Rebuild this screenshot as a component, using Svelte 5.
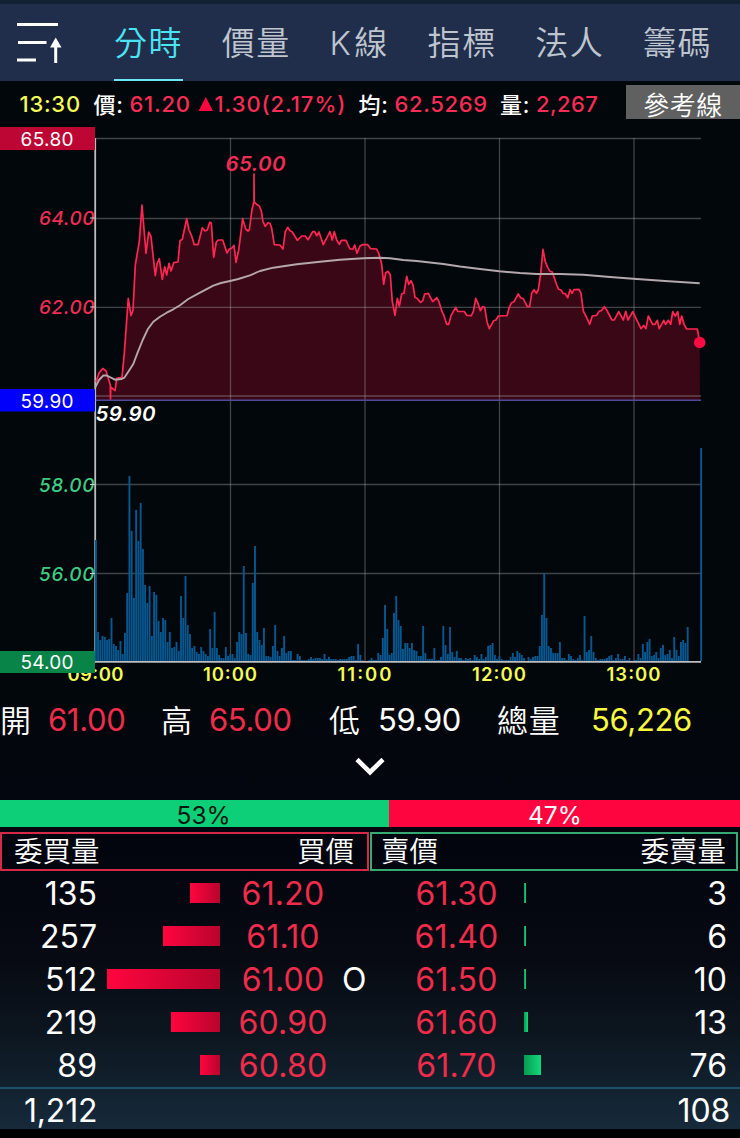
<script lang="ts">
  interface Level {
    price: string;
    volume: string;
    bar: number;
    mark?: string;
  }

  const tabs = ['分時', '價量', 'K線', '指標', '法人', '籌碼'];
  let active = $state(0);

  const stats = [
    { label: '開', value: '61.00', tone: 'up' },
    { label: '高', value: '65.00', tone: 'up' },
    { label: '低', value: '59.90', tone: 'flat' },
    { label: '總量', value: '56,226', tone: 'total' },
  ];

  const bids: Level[] = [
    { price: '61.20', volume: '135', bar: 30 },
    { price: '61.10', volume: '257', bar: 57 },
    { price: '61.00', volume: '512', bar: 113, mark: 'O' },
    { price: '60.90', volume: '219', bar: 49 },
    { price: '60.80', volume: '89', bar: 20 },
  ];

  const asks: Level[] = [
    { price: '61.30', volume: '3', bar: 2 },
    { price: '61.40', volume: '6', bar: 2 },
    { price: '61.50', volume: '10', bar: 2 },
    { price: '61.60', volume: '13', bar: 3.5 },
    { price: '61.70', volume: '76', bar: 17 },
  ];

  // chart geometry
  const left = 95.8;
  const right = 701;
  const base = 661;
  const perMinute = 2.242;
  const hGrid = [138.5, 218.5, 307.3, 396, 484.5, 573.5];
  const hours = [
    { label: '10:00', x: 230.5 },
    { label: '11:00', x: 365 },
    { label: '12:00', x: 499.5 },
    { label: '13:00', x: 634 },
  ];
  const axis = [
    { label: '64.00', y: 225, tone: 'up' },
    { label: '62.00', y: 314, tone: 'up' },
    { label: '58.00', y: 491.5, tone: 'down' },
    { label: '56.00', y: 580.5, tone: 'down' },
  ];

  const price =
    '96,382 99,373 102.7,368.5 106,370.7 110.3,385 110.5,399 110.8,387 115,390.7 116.7,378.3 122,377.3 124.3,353.3 126,330 128.3,298.3 131,315.7 133,310 ' +
    '135.3,265 139.3,241.7 142,205 146,253.3 148.7,232 151,236.7 155.3,275.7 157,264 159.3,258.7 162.3,279.3 164.7,266.7 166.7,275 169,263.3 171,271 ' +
    '173.7,262.7 178,262 180,240.7 182.3,239.3 186.7,218.7 189,230 191.7,236 194.3,244.7 198,244.7 202.3,227.7 205,231 207.3,230 209.7,222.3 211.3,223 ' +
    '213.7,257.3 216.3,242 218.3,240 222.7,240 227,253 229.3,249 231.7,248.3 234,245.3 236,262.3 238.7,250 242.7,218.7 245.7,229 248,231 249.3,230 ' +
    '252,209.3 254,201.7 254,174 254.2,201.7 256.5,204.3 259.3,206 261.3,211 263,221.7 265.3,226.3 268,222.7 270,223.3 271.7,228.3 274.3,244.7 280,245 ' +
    '283,249 285.3,231.7 287.7,227.3 290,230.7 292.3,232 297.3,240.3 301.7,236 305.3,236 308,239.7 312.7,231.7 314.7,231.7 316.7,235.7 319,232 ' +
    '323.3,244.7 330,231.7 332.3,240 334.3,231.7 336.7,240 339.3,244.3 341.3,240.3 346,240.3 350,249 353,249 354.7,245 357,253.3 360,246 362.3,244.7 ' +
    '367.7,244.7 370.7,248.7 376.7,249 379,254 381.7,264.3 383.7,284.3 385.7,272.7 388,271.3 390.3,275 392.3,301.7 395,315.3 397.3,298.3 399.3,306 ' +
    '401.7,294 404,293 406.7,276.3 408.7,284.3 411,280.7 413,285 415,297.3 417,298.3 420.7,302.3 422.7,300.7 424.7,294 428.3,293.3 432.7,301.7 ' +
    '436.7,297.7 439,301.7 442,311.7 444,315.7 446.7,324.3 448.7,324.3 451,315.7 455.7,307.3 457.7,311.3 464.3,311.5 466.7,315.3 471.3,315.7 ' +
    '473.3,311.7 475.7,298.3 478,303.3 480.3,310.7 482.7,306.7 484.7,307.3 487,321.7 489.3,328.7 493.7,320.7 496,320 498.3,316 507,315.7 509.3,307.3 ' +
    '511.3,303 514,301.7 518.3,294 520.7,297.7 523.3,298.7 527.3,306.7 529.7,306.3 531.7,293.3 534,289.7 536.3,293.3 538.3,290 540.7,273.3 543,249.3 ' +
    '545.3,261.7 547.7,267.3 550,271.3 552.3,272 556.7,285 558.7,289.3 561,290 563,293.3 565.3,293.7 567.7,297.7 570,289.7 572,293.3 574,289.7 ' +
    '579,289.3 581,293.3 583.3,311 586.7,317.7 589.7,324.3 592.3,316 596.7,315.3 599,311.3 601.3,310.7 604.3,306.7 606.7,310 612,320 614.3,320 ' +
    '618.7,311.7 623.3,320 625.7,311.3 628,320 632.7,311.7 641,328.7 643.7,325.3 646,328.7 648.3,316 652.7,324.3 655,324.3 657.3,320.3 659.3,328.7 ' +
    '663.7,320.3 665.7,324.3 668.3,320.3 670.7,324.3 672.7,311.7 675.3,316 677.7,311.7 679.7,324.3 681.7,316 684,324.3 686.7,329 697.3,329 699.7,342';

  const average =
    '95.3,387.3 99,380 103.3,375.5 106.7,375.5 115,379.7 121.7,379 124.3,377.7 128.3,371.7 133.3,364 137.3,353.3 142.7,340 147.7,329.3 153.3,321.7 ' +
    '160,316.7 166.7,312.7 173.3,309.3 180,305.3 188.3,299 200,292.7 213.3,285.7 221,283 230,281 238.3,279 250,275.3 260,271 273.3,267.7 296.7,264.3 ' +
    '320,261.7 340,259.7 363.3,258.3 380,257.8 390,258.3 403.3,260 416.7,261 443.3,264 460,266.5 480,269 499.3,271.3 520,273 536.7,274 560,274 ' +
    '583.3,274.7 610,277 633.3,278.7 665,281 699.7,283.3';

  // one bar for each minute from 09:00
  const volumes = [
    121, 29, 21, 25, 24, 21, 22, 43, 17, 15, 11, 20, 7, 28, 68, 185, 130, 63, 151, 120,
    158, 112, 76, 58, 75, 25, 69, 66, 40, 29, 43, 41, 19, 29, 13, 14, 19, 10, 65, 43,
    85, 36, 27, 13, 15, 9, 7, 14, 10, 7, 5, 32, 13, 49, 13, 6, 3, 3, 14, 5,
    7, 7, 3, 19, 29, 27, 95, 28, 7, 6, 78, 115, 29, 21, 16, 33, 5, 5, 4, 15,
    36, 10, 5, 13, 25, 8, 10, 10, 1, 1, 7, 5, 1, 1, 1, 2, 4, 2, 3, 3,
    3, 2, 7, 2, 4, 2, 2, 2, 1, 2, 2, 2, 2, 4, 5, 5, 1, 17, 6, 1,
    0, 0, 1, 3, 1, 1, 8, 6, 23, 56, 32, 6, 8, 48, 65, 41, 35, 12, 18, 18,
    13, 18, 11, 10, 5, 5, 35, 8, 2, 2, 2, 13, 1, 1, 4, 35, 16, 7, 34, 9,
    4, 10, 3, 3, 1, 3, 2, 3, 1, 6, 4, 2, 7, 2, 4, 15, 16, 18, 6, 2,
    5, 2, 1, 1, 1, 4, 8, 4, 10, 8, 6, 3, 0, 4, 2, 4, 5, 5, 15, 46,
    88, 43, 15, 13, 8, 8, 8, 19, 3, 3, 1, 7, 5, 2, 1, 3, 6, 1, 45, 9,
    11, 25, 9, 3, 1, 2, 2, 2, 3, 5, 6, 1, 3, 7, 2, 2, 5, 1, 3, 0,
    1, 1, 7, 3, 17, 9, 19, 22, 5, 6, 9, 3, 13, 16, 6, 7, 11, 3, 24, 11,
    5, 19, 21, 18, 34, 0, 0, 0, 0, 0, 213,
  ];
</script>

<div class="app">
  <nav class="tabs">
    <button class="menu" aria-label="選單">
      <svg width="46" height="42" viewBox="0 0 46 42">
        <path d="M0 2.500H41M1 20.500H29.500M0 38H19" />
        <path d="M38.700 41V22" />
        <path class="head" d="M38.700 15.500L44.500 25.500H33Z" />
      </svg>
    </button>
    {#each tabs as tab, i}
      <button class="tab" class:active={active === i} class:latin={tab.startsWith('K')} onclick={() => (active = i)}>{tab}</button>
    {/each}
  </nav>

  <div class="quote">
    <span class="time">13:30</span>
    <span class="name">價:</span>
    <span class="num price">61.20</span>
    <svg class="tri" width="17" height="14" viewBox="0 0 17 14"><path d="M7.800 0L15 14H0.600Z" /></svg>
    <span class="num change">1.30(2.17%)</span>
    <span class="name">均:</span>
    <span class="num avg">62.5269</span>
    <span class="name">量:</span>
    <span class="num total-num">2,267</span>
    <button class="ref">參考線</button>
  </div>

  <svg class="chart" width="740" height="570" viewBox="0 122 740 570">
    <polygon class="area" points={`${left},400 ${price} 700,400`} />
    {#each hGrid as y}
      <line class="grid" x1={left} x2={right} y1={y} y2={y} />
    {/each}
    {#each hours as hour}
      <line class="grid" x1={hour.x} x2={hour.x} y1="138" y2={base} />
    {/each}
    <line class="axis" x1="95.200" x2="95.200" y1="138" y2="662" />
    <line class="axis" x1="95" x2={right} y1="661.800" y2="661.800" />
    {#each volumes as v, i}
      {#if v > 0}
        <rect class="vol" x={left + i * perMinute - 0.95} y={base - v} width="1.9" height={v} />
      {/if}
    {/each}
    <line class="prev" x1={left} x2={right} y1="400.300" y2="400.300" />
    <polyline class="price-line" points={price} />
    <polyline class="avg-line" points={average} />
    <circle class="dot" cx="699.700" cy="342.500" r="5.700" />

    {#each axis as a}
      <text class={['tick', a.tone]} x="39" y={a.y} textLength="55.500">{a.label}</text>
      <line class="notch" x1="90" x2="95" y1={a.y - 7} y2={a.y - 7} />
    {/each}
    <text class="mark up" x="225.500" y="171" textLength="60">65.00</text>
    <text class="mark" x="95.500" y="420.500" textLength="60">59.90</text>

    <text class="hour" x="67.500" y="681" textLength="56">09:00</text>
    {#each hours as hour}
      <text class="hour" x={hour.x - 27.5} y="681" textLength="54">{hour.label}</text>
    {/each}

    <rect x="0" y="127" width="95" height="23" fill="#bd0633" />
    <text class="tag" x="20.500" y="145.500" textLength="53">65.80</text>
    <rect x="0" y="389" width="95" height="22.500" fill="#0000fb" />
    <text class="tag" x="20.500" y="407.500" textLength="53">59.90</text>
    <rect x="0" y="651" width="95" height="22" fill="#088448" />
    <text class="tag" x="20.500" y="669" textLength="53">54.00</text>
  </svg>

  <div class="stats">
    {#each stats as s}
      <span class="stat-label">{s.label}</span>
      <span class={['stat-value', s.tone]}>{s.value}</span>
    {/each}
  </div>

  <button class="expand" aria-label="展開">
    <svg width="30" height="20" viewBox="0 0 30 20"><path d="M2 2.500L15 15.200L28 2.500" /></svg>
  </button>

  <div class="ratio">
    <div class="buy"><span>53%</span></div>
    <div class="sell"><span>47%</span></div>
  </div>

  <div class="heads">
    <div class="head-box bid"><span>委買量</span><span>買價</span></div>
    <div class="head-box ask"><span>賣價</span><span>委賣量</span></div>
  </div>

  <div class="book">
    {#each bids as bid, i}
      <div class="row">
        <span class="vol-cell">{bid.volume}</span>
        <span class="track"><i class="bid-bar" style:width={`${bid.bar}px`}></i></span>
        <span class="lvl">{bid.price}</span>
        <span class="own">{bid.mark ?? ''}</span>
        <span class="lvl">{asks[i].price}</span>
        <span class="track ask-track"><i class="ask-bar" style:width={`${asks[i].bar}px`}></i></span>
        <span class="vol-cell">{asks[i].volume}</span>
      </div>
    {/each}
  </div>

  <div class="totals">
    <span>1,212</span>
    <span>108</span>
  </div>
</div>

<style>
  :global(body) { background: #000; }
  .app { width: 740px; height: 1138px; overflow: hidden; display: flex; flex-direction: column; box-sizing: border-box; border-bottom: 9px solid #000; color: #fff; font-family: Inter, "Noto Sans CJK TC", sans-serif; background: linear-gradient(180deg, #02070c 0, #02070c 700px, #03050e 850px, #070a13 960px, #0c151e 1030px, #162a3b 1129px); }
  button { background: none; border: 0; padding: 0; margin: 0; color: inherit; font: inherit; cursor: pointer; }

  .tabs { height: 77px; flex-shrink: 0; border-top: 4px solid #122133; background: #212e4b; display: flex; align-items: stretch; gap: 38.5px; }
  .menu { width: 46px; margin: 0 12.5px 0 17px; }
  .menu svg { display: block; }
  .menu path { fill: none; stroke: #fff; stroke-width: 3; }
  .menu .head { fill: #fff; stroke: none; }
  .tab { flex-shrink: 0; padding-bottom: 3px; font-size: 33px; font-weight: 350; letter-spacing: 1.6px; color: #bfc5cf; white-space: nowrap; }
  .tab.latin { letter-spacing: 3.4px; margin-right: -1.5px; }
  .tab.active { color: #4be4f4; box-shadow: inset 0 -2px #6ce6f2; }

  .quote { height: 41px; box-sizing: border-box; flex-shrink: 0; display: flex; align-items: center; padding: 4px 0 0 19.5px; font-size: 22px; font-weight: 500; letter-spacing: 0.75px; white-space: nowrap; }
  .time { width: 74px; color: #f3fb55; }
  .name { width: 36px; margin-top: -2px; }
  .num { color: #f92c55; }
  .price { width: 68px; }
  .tri { fill: #ff063f; }
  .change { width: 144px; letter-spacing: 0.95px; }
  .avg { width: 105.5px; letter-spacing: 0.65px; }
  .total-num { letter-spacing: 0.4px; }
  .ref { width: 114px; height: 34px; margin: -3px 0 0 auto; padding-bottom: 2px; background: #606060; font-size: 26px; font-weight: 350; letter-spacing: 0.5px; }

  .chart { display: block; flex-shrink: 0; }
  .area { fill: #3a0716; }
  .grid { stroke: #a8a8a8; stroke-opacity: 0.38; stroke-width: 1.3; }
  .axis { stroke: #bcbcbc; stroke-width: 1.8; }
  .vol { fill: #075891; }
  .prev { stroke: #504a9b; stroke-width: 1.6; }
  .price-line { fill: none; stroke: #ff2652; stroke-width: 1.7; stroke-linejoin: round; }
  .avg-line { fill: none; stroke: #b4a8ac; stroke-width: 1.9; stroke-linejoin: round; }
  .dot { fill: #ff0b43; }
  .notch { stroke: #c8c8c8; stroke-width: 1; }
  .tick { font-size: 19px; font-weight: 500; font-style: italic; }
  .mark { font-size: 20.5px; font-weight: 600; font-style: italic; fill: #fff; }
  .tick.up, .mark.up { fill: #f02c53; }
  .tick.down { fill: #3ecb83; }
  .hour { font-size: 18.5px; font-weight: 600; fill: #f3fb55; }
  .tag { font-size: 19px; fill: #fff; }

  .stats { height: 55px; padding-bottom: 1px; flex-shrink: 0; display: grid; grid-template-columns: 48px 113px 48px 120px 49px 119px 94px 1fr; align-items: center; font-size: 31px; letter-spacing: -0.35px; white-space: nowrap; }
  .stat-label { font-weight: 350; letter-spacing: 0.8px; margin-top: -3px; }
  .stat-value.up { color: #f02c4b; }
  .stat-value.total { color: #f8f83f; }

  .expand { height: 52px; flex-shrink: 0; display: flex; justify-content: center; padding-top: 9px; }
  .expand path { fill: none; stroke: #fff; stroke-width: 4.6; }

  .ratio { height: 27px; flex-shrink: 0; display: flex; line-height: 31px; font-size: 24.5px; }
  .buy { width: 389px; flex-shrink: 0; background: #0dcf78; color: #071810; }
  .buy span { margin-left: 176.5px; }
  .sell { background: #ff053f; flex: 1; }
  .sell span { margin-left: 139px; }

  .heads { height: 39px; flex-shrink: 0; margin-top: 5px; display: flex; gap: 1px; }
  .head-box { width: 369px; box-sizing: border-box; border: 2px solid #d62948; display: flex; justify-content: space-between; align-items: center; padding: 0 13px 0 12px; font-size: 28.5px; font-weight: 350; line-height: 34px; }
  .head-box.ask { border-color: #37aa72; width: 368px; padding: 0 10px 0 9px; }

  .book { padding-top: 1px; flex-shrink: 0; }
  .row { height: 43px; display: grid; grid-template-columns: 97px 123px 126px 52px 117px 118px 1fr; align-items: center; font-size: 32px; line-height: 43px; padding-right: 13px; }
  .vol-cell { text-align: right; }
  .track { display: flex; align-items: center; justify-content: flex-end; height: 41px; margin-bottom: 2px; }
  .ask-track { justify-content: flex-start; padding-left: 9px; }
  .bid-bar, .ask-bar { height: 20px; }
  .bid-bar { background: linear-gradient(90deg, #ff053f, #b8042c); }
  .ask-bar { background: linear-gradient(90deg, #079b50, #12d87e); }
  .lvl { text-align: center; color: #f02c4b; letter-spacing: 0.2px; }
  .own { margin-left: -4px; }

  .totals { flex: 1; border-top: 2px solid #1c5069; display: flex; justify-content: space-between; align-items: center; padding: 2px 10px 0 24px; font-size: 32px; letter-spacing: -0.2px; }
</style>
